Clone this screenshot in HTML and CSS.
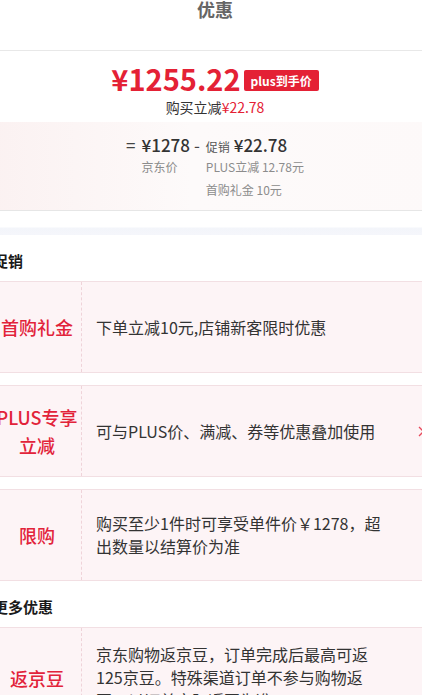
FILE: index.html
```html
<!DOCTYPE html>
<html lang="zh-CN">

<head>
    <meta charset="UTF-8">
    <meta name="viewport" content="width=device-width, initial-scale=1.0">
    <title>优惠</title>
    <link rel="stylesheet" href="styles.css">
</head>

<body>

    <div class="page">
        <div class="header">
            <h1 class="title">优惠</h1>
        </div>

        <div class="price-box">
            <div class="price-line">
                <span class="price">¥1255.22</span>
                <span class="badge">plus到手价</span>
            </div>
            <div class="save">购买立减<em>¥22.78</em></div>
        </div>

        <div class="calc">
            <span class="op">=</span>
            <div class="calc-col">
                <div class="num">¥1278</div>
                <div class="sub">京东价</div>
            </div>
            <span class="op">-</span>
            <div class="calc-col">
                <div class="num"><small>促销</small> ¥22.78</div>
                <div class="sub">PLUS立减 12.78元</div>
                <div class="sub">首购礼金 10元</div>
            </div>
        </div>

        <div class="band"></div>

        <div class="section">
            <h2 class="section-title">促销</h2>
            <div class="promo">
                <div class="promo-tag">首购礼金</div>
                <div class="promo-desc">下单立减10元,店铺新客限时优惠</div>
            </div>
            <div class="promo">
                <div class="promo-tag">PLUS专享<br>立减</div>
                <div class="promo-desc">可与PLUS价、满减、券等优惠叠加使用</div>
                <span class="promo-arrow">
                    <svg width="7" height="11" viewBox="0 0 7 11">
                        <path d="M1 1 L5.5 5.5 L1 10" fill="none" stroke="#e8495b" stroke-width="1.3" />
                    </svg>
                </span>
            </div>
            <div class="promo">
                <div class="promo-tag">限购</div>
                <div class="promo-desc">购买至少1件时可享受单件价￥1278，超出数量以结算价为准</div>
            </div>

            <h2 class="section-title">更多优惠</h2>
            <div class="promo">
                <div class="promo-tag">返京豆</div>
                <div class="promo-desc">京东购物返京豆，订单完成后最高可返125京豆。特殊渠道订单不参与购物返豆，以订单实际返豆为准</div>
            </div>
        </div>
    </div>

</body>

</html>
```

FILE: styles.css
```css
html,
body,
h1,
h2 {
    margin: 0;
    padding: 0;
}

body {
    overflow: hidden;
    background-color: #fff;
    font-family: "Noto Sans CJK SC", "Noto Sans", sans-serif;
    color: #333;
}

.page {
    width: 464px;
    margin-left: -17px;
}

.header {
    height: 50px;
    border-bottom: 1px solid #e8e8e8;
    text-align: center;
}

.title {
    font-size: 18px;
    line-height: 18px;
    font-weight: 700;
    color: #666;
}

.price-box {
    padding: 9px 0 5px;
    text-align: center;
}

.price-line {
    display: flex;
    justify-content: center;
    align-items: center;
    gap: 3px;
    height: 37px;
}

.price {
    font-size: 29px;
    line-height: 1;
    font-weight: 700;
    color: #e42135;
}

.badge {
    margin-top: 3px;
    height: 21px;
    line-height: 21px;
    padding: 0 7px;
    font-size: 12px;
    font-weight: 700;
    color: #fff;
    background-color: #e42135;
    border-radius: 2px;
}

.save {
    font-size: 14px;
    line-height: 20px;
    color: #333;
}

.save em {
    font-style: normal;
    color: #e42135;
}

.calc {
    display: flex;
    justify-content: center;
    align-items: flex-start;
    padding: 12px 0 9px 4px;
    background: linear-gradient(90deg, #fbf1f1, #fdfafa 45%, #fdf9f9);
    border-bottom: 1px solid #e6e6e6;
}

.op {
    font-size: 17px;
    line-height: 21px;
    color: #444;
    margin: 0 6px 0 0;
}

.calc-col {
    margin-right: 4px;
}

.num {
    font-size: 17px;
    line-height: 21px;
    font-weight: 500;
    color: #333;
}

.num small {
    font-size: 12px;
    line-height: 1;
    font-weight: 400;
    color: #555;
}

.sub {
    font-size: 12px;
    line-height: 23px;
    color: #8c8c8c;
}

.band {
    height: 24px;
    background: linear-gradient(180deg, #fff 0, #fff 16px, #f3f5fa 17px, #f5f6fb 24px);
}

.section {
    padding: 0 10px;
}

.section-title {
    padding: 16px 0 10px;
    font-size: 15px;
    line-height: 20px;
    font-weight: 700;
    color: #1a1a1a;
}

.promo {
    display: flex;
    align-items: stretch;
    min-height: 92px;
    box-sizing: border-box;
    margin-bottom: 12px;
    background-color: #fdf4f6;
    border-top: 1px solid #f2dfe3;
    border-bottom: 1px solid #f2dfe3;
}

.promo:last-child,
.promo:has(+ .section-title) {
    margin-bottom: 0;
}

.promo-tag {
    display: flex;
    align-items: center;
    justify-content: center;
    flex: 0 0 88px;
    border-right: 1px dashed #efd3d9;
    text-align: center;
    font-size: 18px;
    line-height: 28px;
    font-weight: 500;
    color: #e2233a;
}

.promo-desc {
    display: flex;
    align-items: center;
    width: 290px;
    padding: 15px 0 15px 14px;
    font-size: 16px;
    line-height: 23px;
    color: #333;
}

.promo-arrow {
    display: flex;
    align-items: center;
    margin-left: auto;
    padding-right: 12px;
}
```
